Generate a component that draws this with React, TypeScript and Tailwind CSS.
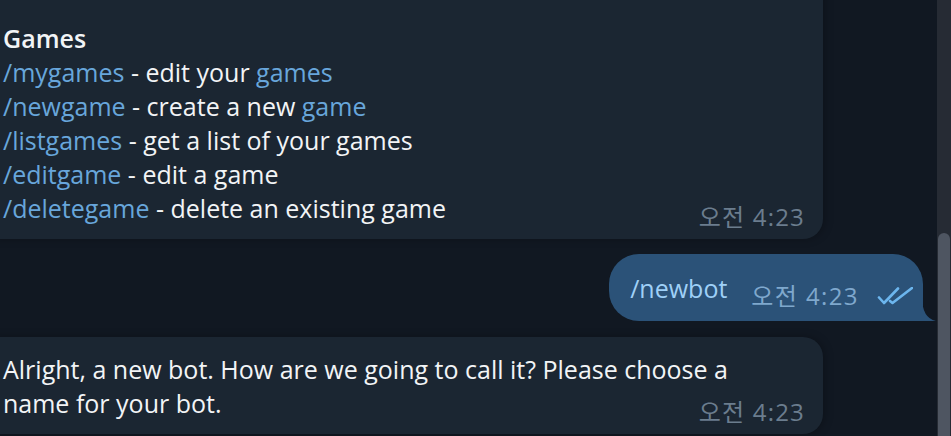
import React from "react";

const font = { fontFamily: '"Open Sans", "Noto Sans CJK KR", sans-serif' };

function Checks() {
  return (
    <svg width="36" height="18" viewBox="0 0 36 18" fill="none" className="block shrink-0 ml-[18px] mb-[1px]">
      <path d="M2 10.5 L7 16 L21 1.5" stroke="#6cb6ee" strokeWidth="2.6" strokeLinecap="round" strokeLinejoin="round" />
      <path d="M13 14 L15.5 16 L35 1" stroke="#6cb6ee" strokeWidth="2.6" strokeLinecap="round" strokeLinejoin="round" />
    </svg>
  );
}

const Link = ({ children }: { children: React.ReactNode }) => (
  <span className="text-[#68a6db]">{children}</span>
);

export default function App() {
  return (
    <div
      className="w-[951px] h-[436px] overflow-hidden bg-[#111822] flex text-[#f2f4f6] text-[25px] leading-[34px]"
      style={font}
    >
      <div className="flex-1 flex flex-col">
        {/* Incoming bubble 1 */}
        <div className="self-start ml-[-20px] mt-[-30px] w-[843px] rounded-[20px] bg-[#1b2632] pl-[23px] pr-[18px] pt-[51px] pb-[14px] flex items-end justify-between shadow-[2px_0_8px_rgba(0,0,0,0.25)]">
          <div className="flex-1 min-w-0 whitespace-nowrap">
            <div className="font-semibold">Games</div>
            <div><Link>/mygames</Link> - edit your <Link>games</Link></div>
            <div><Link>/newgame</Link> - create a new <Link>game</Link></div>
            <div><Link>/listgames</Link> - get a list of your games</div>
            <div><Link>/editgame</Link> - edit a game</div>
            <div><Link>/deletegame</Link> - delete an existing game</div>
          </div>
          <span className="block shrink-0 mb-[-2px] whitespace-nowrap text-[24px] leading-[20px] tracking-[1.2px] text-[#6b7d8e]">오전 4:23</span>
        </div>

        {/* Outgoing bubble */}
        <div className="self-end mt-[15px] mr-[14px] relative">
          <div className="h-[67px] rounded-[30px] rounded-br-none bg-[#2b5278] pl-[21px] pr-[10px] pb-[15px] flex items-end">
            <span className="block whitespace-nowrap text-[#9fd0f7] mb-[1px]">/newbot</span>
            <span className="block ml-[24px] whitespace-nowrap text-[24px] leading-[20px] tracking-[1.4px] text-[#7fa8cd]">오전 4:23</span>
            <Checks />
          </div>
          <svg
            width="14"
            height="24"
            viewBox="0 0 14 24"
            className="absolute right-[-13px] bottom-0"
          >
            <path d="M0 0 Q0 21 14 24 L0 24 Z" fill="#2b5278" />
          </svg>
        </div>

        {/* Incoming bubble 3 */}
        <div className="self-start ml-[-20px] mt-[16px] w-[843px] rounded-[20px] bg-[#1b2632] pl-[23px] pr-[18px] pt-[15px] pb-[14px] flex items-end justify-between shadow-[2px_0_8px_rgba(0,0,0,0.25)]">
          <div className="flex-1 min-w-0 whitespace-nowrap">
            Alright, a new bot. How are we going to call it? Please choose a
            <br />
            name for your bot.
          </div>
          <span className="block shrink-0 mb-[-2px] whitespace-nowrap text-[24px] leading-[20px] tracking-[1.2px] text-[#6b7d8e]">오전 4:23</span>
        </div>
      </div>

      {/* Scrollbar */}
      <div className="w-[14px] bg-[#262b34] flex flex-col">
        <div className="mt-[233px] ml-[1px] w-[12px] flex-1 rounded-t-[6px] bg-[#4e5561]" />
      </div>
    </div>
  );
}
